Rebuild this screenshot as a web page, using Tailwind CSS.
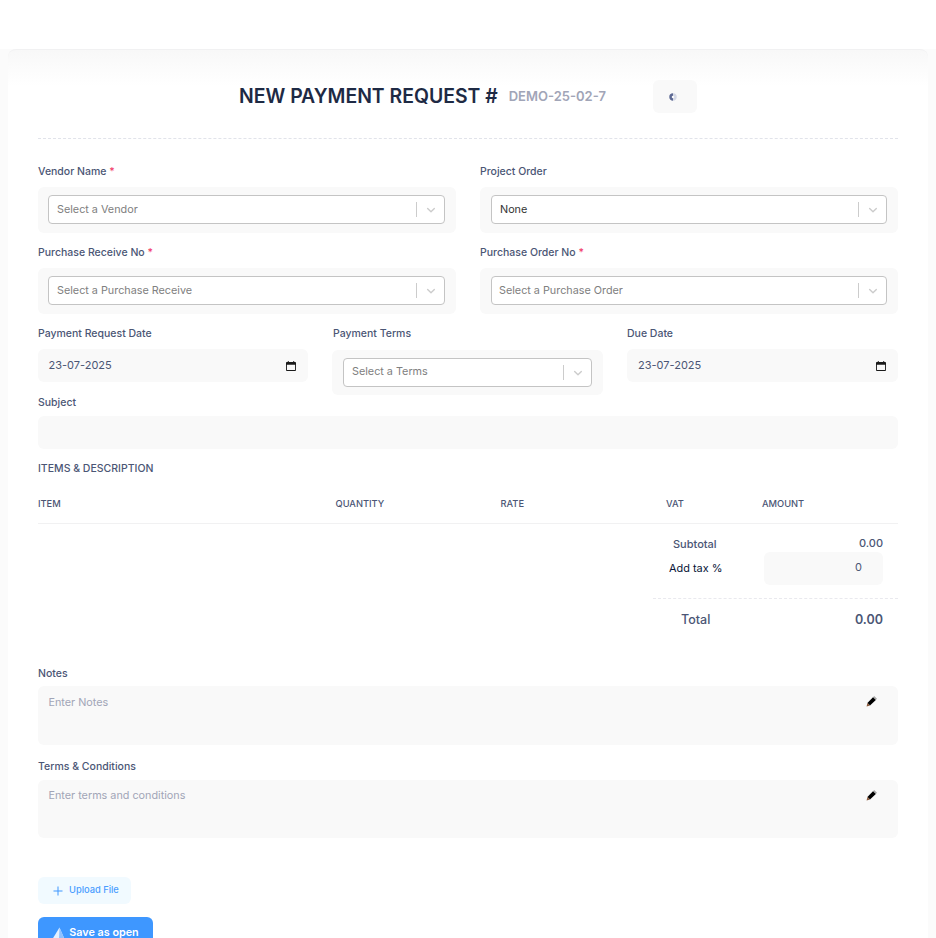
<!DOCTYPE html>
<html lang="en">
<head>
    <meta charset="UTF-8">
    <meta name="viewport" content="width=device-width, initial-scale=1.0">
    <title>New Payment Request</title>
    <script src="https://cdn.jsdelivr.net/npm/@tailwindcss/browser@4"></script>
</head>
<body class="bg-white font-['Inter',sans-serif] text-[#3f4254] h-[938px] overflow-hidden">
    <!-- Top bar -->
    <div class="h-[49px] bg-white"></div>

    <div class="bg-[#fbfbfb] px-2 h-[889px]">
        <div class="h-[1000px] rounded-t-lg border-t border-[#f1f1f2] px-[30px] bg-gradient-to-b from-[#f8f8f8] to-white to-[36px]">
            <!-- Header -->
            <div class="h-[89px] border-b border-dashed border-[#e1e3ea] flex items-start">
                <div class="ml-[201px] mt-[30px] h-[33px] flex items-center">
                    <h1 class="mt-px text-[19.4px] font-semibold text-[#1e2a44] leading-none whitespace-nowrap">NEW PAYMENT REQUEST #</h1>
                    <span class="ml-[11px] text-[13px] font-semibold text-[#a1a5b7] whitespace-nowrap">DEMO-25-02-7</span>
                    <div class="ml-[47px] w-[44px] h-[33px] rounded-md bg-[#f9f9f9] flex items-center pl-[16px]">
                        <svg width="8" height="8" viewBox="0 0 8 8" fill="none" stroke-width="2.5"><path d="M4 1.5a2.5 2.5 0 0 0 0 5" stroke="#5e6a94"/><path d="M4 1.5a2.5 2.5 0 0 1 0 5" stroke="#d5d9e6"/></svg>
                    </div>
                </div>
            </div>

            <!-- Vendor / project -->
            <div class="grid grid-cols-2 gap-x-6 mt-[24px]">
                <div>
                    <label class="block h-[16px] pt-px text-[10.5px] leading-[16px] font-medium text-[#4b5675]">Vendor Name <span class="text-[#f1416c]">*</span></label>
                    <div class="mt-2 h-[46px] bg-[#f9f9f9] rounded-md pl-[10px] pr-[11px] py-2">
                        <div class="h-[29px] bg-white border border-[#c4c4c4] rounded-[4px] flex items-center pl-2">
                            <span class="flex-1 pt-[2px] text-[10.8px] text-[#808080]">Select a Vendor</span>
                            <span class="w-px h-[15px] bg-[#cccccc]"></span>
                            <svg class="ml-[7px] mr-[6px]" width="14" height="14" viewBox="0 0 20 20" fill="#cccccc"><path d="M4.5 7.2a1 1 0 0 1 1.4 0L10 11.1l4.1-3.9a1 1 0 0 1 1.4 1.4l-4.8 4.6a1 1 0 0 1-1.4 0L4.5 8.6a1 1 0 0 1 0-1.4z"/></svg>
                        </div>
                    </div>
                </div>
                <div>
                    <label class="block h-[16px] pt-px text-[10.5px] leading-[16px] font-medium text-[#4b5675]">Project Order</label>
                    <div class="mt-2 h-[46px] bg-[#f9f9f9] rounded-md px-[11px] py-2">
                        <div class="h-[29px] bg-white border border-[#c4c4c4] rounded-[4px] flex items-center pl-2">
                            <span class="flex-1 pt-[2px] text-[10.8px] text-[#333333]">None</span>
                            <span class="w-px h-[15px] bg-[#cccccc]"></span>
                            <svg class="ml-[7px] mr-[6px]" width="14" height="14" viewBox="0 0 20 20" fill="#cccccc"><path d="M4.5 7.2a1 1 0 0 1 1.4 0L10 11.1l4.1-3.9a1 1 0 0 1 1.4 1.4l-4.8 4.6a1 1 0 0 1-1.4 0L4.5 8.6a1 1 0 0 1 0-1.4z"/></svg>
                        </div>
                    </div>
                </div>
            </div>

            <!-- Purchase receive / order -->
            <div class="grid grid-cols-2 gap-x-6 mt-[11px]">
                <div>
                    <label class="block h-[16px] pt-px text-[10.5px] leading-[16px] font-medium text-[#4b5675]">Purchase Receive No <span class="text-[#f1416c]">*</span></label>
                    <div class="mt-2 h-[46px] bg-[#f9f9f9] rounded-md pl-[10px] pr-[11px] py-2">
                        <div class="h-[29px] bg-white border border-[#c4c4c4] rounded-[4px] flex items-center pl-2">
                            <span class="flex-1 pt-[2px] text-[10.8px] text-[#808080]">Select a Purchase Receive</span>
                            <span class="w-px h-[15px] bg-[#cccccc]"></span>
                            <svg class="ml-[7px] mr-[6px]" width="14" height="14" viewBox="0 0 20 20" fill="#cccccc"><path d="M4.5 7.2a1 1 0 0 1 1.4 0L10 11.1l4.1-3.9a1 1 0 0 1 1.4 1.4l-4.8 4.6a1 1 0 0 1-1.4 0L4.5 8.6a1 1 0 0 1 0-1.4z"/></svg>
                        </div>
                    </div>
                </div>
                <div>
                    <label class="block h-[16px] pt-px text-[10.5px] leading-[16px] font-medium text-[#4b5675]">Purchase Order No <span class="text-[#f1416c]">*</span></label>
                    <div class="mt-2 h-[46px] bg-[#f9f9f9] rounded-md px-[11px] py-2">
                        <div class="h-[29px] bg-white border border-[#c4c4c4] rounded-[4px] flex items-center pl-[7px]">
                            <span class="flex-1 pt-[2px] text-[10.8px] text-[#808080]">Select a Purchase Order</span>
                            <span class="w-px h-[15px] bg-[#cccccc]"></span>
                            <svg class="ml-[7px] mr-[6px]" width="14" height="14" viewBox="0 0 20 20" fill="#cccccc"><path d="M4.5 7.2a1 1 0 0 1 1.4 0L10 11.1l4.1-3.9a1 1 0 0 1 1.4 1.4l-4.8 4.6a1 1 0 0 1-1.4 0L4.5 8.6a1 1 0 0 1 0-1.4z"/></svg>
                        </div>
                    </div>
                </div>
            </div>

            <!-- Dates -->
            <div class="grid grid-cols-[270px_271px_271px] gap-x-6 mt-[11px]">
                <div>
                    <label class="block h-[16px] pt-px text-[10.5px] leading-[16px] font-medium text-[#4b5675]">Payment Request Date</label>
                    <div class="mt-2 h-[33px] bg-[#f9f9f9] rounded-md flex items-center justify-between pl-[10.5px] pr-[12px]">
                        <span class="text-[11px] text-[#4b5675] -mt-px">23-07-2025</span>
                        <svg width="10" height="10" viewBox="0 0 11 11"><path fill="#1a1a1a" fill-rule="evenodd" d="M2 0h1v1h5V0h1v1h1a1 1 0 0 1 1 1v8a1 1 0 0 1-1 1H1a1 1 0 0 1-1-1V2a1 1 0 0 1 1-1h1zM1 4v6h9V4z"/></svg>
                    </div>
                </div>
                <div>
                    <label class="block h-[16px] pt-px pl-px text-[10.5px] leading-[16px] font-medium text-[#4b5675]">Payment Terms</label>
                    <div class="mt-[9px] h-[45px] bg-[#f9f9f9] rounded-md px-[11px] py-2">
                        <div class="h-[29px] bg-white border border-[#c4c4c4] rounded-[4px] flex items-center pl-2">
                            <span class="flex-1 text-[10.8px] text-[#808080]">Select a Terms</span>
                            <span class="w-px h-[15px] bg-[#cccccc]"></span>
                            <svg class="ml-[7px] mr-[6px]" width="14" height="14" viewBox="0 0 20 20" fill="#cccccc"><path d="M4.5 7.2a1 1 0 0 1 1.4 0L10 11.1l4.1-3.9a1 1 0 0 1 1.4 1.4l-4.8 4.6a1 1 0 0 1-1.4 0L4.5 8.6a1 1 0 0 1 0-1.4z"/></svg>
                        </div>
                    </div>
                </div>
                <div>
                    <label class="block h-[16px] pt-px text-[10.5px] leading-[16px] font-medium text-[#4b5675]">Due Date</label>
                    <div class="mt-2 h-[33px] bg-[#f9f9f9] rounded-md flex items-center justify-between pl-[11px] pr-[12px]">
                        <span class="text-[11px] text-[#4b5675] -mt-px">23-07-2025</span>
                        <svg width="10" height="10" viewBox="0 0 11 11"><path fill="#1a1a1a" fill-rule="evenodd" d="M2 0h1v1h5V0h1v1h1a1 1 0 0 1 1 1v8a1 1 0 0 1-1 1H1a1 1 0 0 1-1-1V2a1 1 0 0 1 1-1h1zM1 4v6h9V4z"/></svg>
                    </div>
                </div>
            </div>

            <!-- Subject -->
            <label class="block mt-[-1px] h-[16px] pt-px text-[10.5px] leading-[16px] font-medium text-[#4b5675]">Subject</label>
            <div class="mt-[6px] h-[33px] bg-[#f9f9f9] rounded-md"></div>

            <!-- Items -->
            <div class="mt-[11px] h-[16px] pt-px text-[10.5px] leading-[16px] font-medium text-[#4b5675]">ITEMS &amp; DESCRIPTION</div>
            <div class="mt-[20px] h-[28px] border-b border-[#f1f1f2] flex text-[9.3px] leading-[16px] font-medium text-[#4b5675]">
                <span class="w-[297.5px]">ITEM</span>
                <span class="w-[165px]">QUANTITY</span>
                <span class="w-[165.5px]">RATE</span>
                <span class="w-[96px]">VAT</span>
                <span>AMOUNT</span>
            </div>

            <!-- Totals -->
            <div class="ml-[615px] h-[96px]">
                <div class="flex justify-between pt-[12px] pr-[15px] pl-[20px] h-[28px]">
                    <span class="text-[11px] leading-[16px] text-[#4b5675] font-medium">Subtotal</span>
                    <span class="text-[11px] leading-[14px] text-[#4b5675] font-medium">0.00</span>
                </div>
                <div class="flex items-center justify-between pl-[16px] pr-[15px] h-[33px]">
                    <span class="text-[10.9px] font-normal text-[#071437]">Add tax %</span>
                    <div class="w-[119px] h-[33px] bg-[#f9f9f9] rounded-md flex items-center justify-end pr-[21px]">
                        <span class="text-[11px] text-[#4b5675] -mt-[2px]">0</span>
                    </div>
                </div>
                <div class="mt-[13px] border-t border-dashed border-[#e9e9ee] flex justify-between pl-[28px] pr-[15px] pt-[13px]">
                    <span class="text-[12.5px] leading-[16px] font-medium text-[#4b5675]">Total</span>
                    <span class="text-[12.5px] leading-[16px] font-semibold text-[#4b5675]">0.00</span>
                </div>
            </div>

            <!-- Notes -->
            <label class="block mt-[45px] h-[16px] pt-px text-[10.5px] leading-[16px] font-medium text-[#4b5675]">Notes</label>
            <div class="mt-[5px] h-[59px] bg-[#f9f9f9] rounded-md flex justify-between pl-[10.5px] pr-[20px] pt-[9px]">
                <span class="text-[10.8px] leading-[16px] text-[#a1a5b7]">Enter Notes</span>
                <svg width="12" height="12" viewBox="0 0 12 12"><path d="M8.2 1L11 3.8L9.8 5L7 2.2z" fill="#a8a8a8"/><path d="M7 2.2L9.8 5L4 10.6L1.4 8z" fill="#000"/><path d="M1.4 8L4 10.6L0.6 11.4z" fill="#8a5a3c"/></svg>
            </div>

            <label class="block mt-[13px] h-[16px] pt-px text-[10.5px] leading-[16px] font-medium text-[#4b5675]">Terms &amp; Conditions</label>
            <div class="mt-[6px] h-[58px] bg-[#f9f9f9] rounded-md flex justify-between pl-[10.5px] pr-[20px] pt-[8px]">
                <span class="text-[10.8px] leading-[16px] text-[#a1a5b7]">Enter terms and conditions</span>
                <svg class="mt-px" width="12" height="12" viewBox="0 0 12 12"><path d="M8.2 1L11 3.8L9.8 5L7 2.2z" fill="#a8a8a8"/><path d="M7 2.2L9.8 5L4 10.6L1.4 8z" fill="#000"/><path d="M1.4 8L4 10.6L0.6 11.4z" fill="#8a5a3c"/></svg>
            </div>

            <!-- Actions -->
            <div class="mt-[39px] w-[93px] h-[27px] rounded-md bg-[#f1faff] flex items-center pl-[15px] gap-[6px] text-[9.3px] font-medium text-[#4a9dff]">
                <svg width="10" height="10" viewBox="0 0 10 10"><path d="M5 0.5v9M0.5 5h9" stroke="#3e97ff" stroke-width="1"/></svg>
                <span class="-mt-px">Upload File</span>
            </div>
            <div class="mt-[13px] w-[115px] h-[32px] rounded-md bg-[#3e97ff] flex items-center justify-center gap-[4px] text-[10.8px] font-semibold text-white">
                <svg width="13" height="13" viewBox="0 0 13 13"><path d="M7.5 0.5L12.5 12H0.5z" fill="#e4f0ff"/><path d="M7.5 0.5L12.5 12H7z" fill="#8fc1ff"/></svg>
                Save as open
            </div>
        </div>
    </div>
</body>
</html>
